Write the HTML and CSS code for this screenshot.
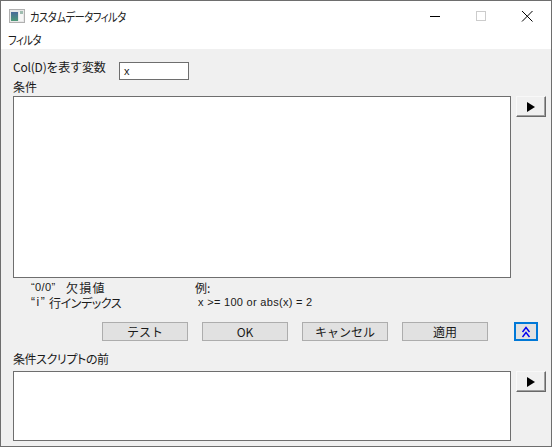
FILE: index.html
```html
<!DOCTYPE html>
<html lang="ja">
<head>
    <meta charset="UTF-8">
    <title>カスタムデータフィルタ</title>
    <link rel="stylesheet" href="styles.css">
</head>
<body>
    <div class="window">
        <!-- Title bar -->
        <div class="titlebar">
            <svg class="app-icon" width="16" height="14" viewBox="0 0 16 14">
                <defs>
                    <linearGradient id="panel" x1="0" y1="0" x2="0" y2="1">
                        <stop offset="0" stop-color="#4a6a9a"/>
                        <stop offset="1" stop-color="#4f9a78"/>
                    </linearGradient>
                </defs>
                <rect x="0.5" y="0.5" width="15" height="13" fill="#e8e8e8" stroke="#b0b0b0"/>
                <rect x="2" y="3" width="7" height="9" fill="url(#panel)"/>
                <rect x="10" y="3" width="4" height="9" fill="#f6f6f6"/>
                <rect x="11" y="2" width="3" height="3" fill="#9fbdb0"/>
            </svg>
            <div class="title"><span class="narrow">カスタムデータフィルタ</span></div>
            <div class="controls">
                <svg width="46" height="30" viewBox="0 0 46 30"><path d="M18 15.500H28" stroke="#000" fill="none"/></svg>
                <svg width="46" height="30" viewBox="0 0 46 30"><rect x="18.500" y="10.500" width="9" height="9" stroke="#ccc" fill="none"/></svg>
                <svg width="46" height="30" viewBox="0 0 46 30"><path d="M18 10L28.500 20.500M28.500 10L18 20.500" stroke="#000" fill="none"/></svg>
            </div>
        </div>

        <!-- Menu -->
        <div class="menubar"><span class="narrow">フィルタ</span></div>

        <div class="content">
            <div class="var-row">
                <label class="var-label">Col(D)を表す変数</label>
                <div class="field">x</div>
            </div>
            <div class="label cond-label">条件</div>
            <div class="editor-row">
                <div class="editor editor-main"></div>
                <button class="run-btn"><svg width="10" height="10" viewBox="0 0 10 10"><path d="M1 0L9 5L1 10Z" fill="#000"/></svg></button>
            </div>

            <div class="hints">
                <div class="hint-col hint-left">
                    <div class="hint-line"><span class="token token-nan">“0/0”</span><span class="wide">欠損値</span></div>
                    <div class="hint-line"><span class="token token-i">“i”</span><span class="kana">行インデックス</span></div>
                </div>
                <div class="hint-col">
                    <div>例:</div>
                    <div class="example">x &gt;= 100 or abs(x) = 2</div>
                </div>
            </div>

            <div class="actions">
                <button class="btn">テスト</button>
                <button class="btn">OK</button>
                <button class="btn">キャンセル</button>
                <button class="btn">適用</button>
                <button class="collapse-btn">
                    <svg width="10" height="12" viewBox="0 0 10 12"><path d="M1.500 6L5 1.500L8.500 6M1.500 11L5 6.500L8.500 11" stroke="#0000f0" stroke-width="1.400" fill="none"/></svg>
                </button>
            </div>

            <div class="label pre-label kana">条件スクリプトの前</div>
            <div class="editor-row">
                <div class="editor editor-pre"></div>
                <button class="run-btn"><svg width="10" height="10" viewBox="0 0 10 10"><path d="M1 0L9 5L1 10Z" fill="#000"/></svg></button>
            </div>
        </div>
    </div>
</body>
</html>
```

FILE: styles.css
```css
* {
    box-sizing: border-box;
    margin: 0;
    padding: 0;
    font-family: "Noto Sans CJK JP", "Liberation Sans", sans-serif;
}

body {
    background-color: #ffffff;
    color: #1a1a1a;
    font-size: 12px;
    overflow: hidden;
}

.window {
    width: 552px;
    height: 447px;
    display: flex;
    flex-direction: column;
    border: 1px solid #6e6e6e;
    background-color: #f0f0f0;
}

/* Title bar */
.titlebar {
    height: 30px;
    display: flex;
    align-items: center;
    padding-left: 8px;
    background-color: #ffffff;
    flex-shrink: 0;
}

.app-icon {
    margin-right: 5px;
}

.title {
    flex: 1;
    color: #222222;
}

/* Condensed katakana used by the title and the menu */
.narrow {
    display: inline-block;
    font-feature-settings: "palt";
    letter-spacing: -0.6px;
    transform: scaleX(0.86);
    transform-origin: left center;
}

.controls {
    display: flex;
    margin-right: 1px;
}

.controls svg {
    display: block;
}

/* Menu */
.menubar {
    height: 18px;
    line-height: 18px;
    padding-left: 7px;
    background-color: #ffffff;
    flex-shrink: 0;
}

/* Content */
.content {
    flex: 1;
    padding: 0 5px 0 12px;
}

.var-row {
    display: flex;
    align-items: flex-start;
    height: 18px;
    margin-top: 13px;
}

.var-label {
    width: 106px;
    line-height: 10px;
    letter-spacing: -0.2px;
}

.field {
    width: 70px;
    height: 18px;
    line-height: 17px;
    padding-left: 4px;
    background-color: #ffffff;
    border: 1px solid #6e6e6e;
    font-family: "Liberation Sans", sans-serif;
    font-size: 11px;
}

.label {
    height: 16px;
    line-height: 14px;
}

.kana {
    font-feature-settings: "palt";
    letter-spacing: -0.4px;
}

.editor-row {
    display: flex;
    gap: 5px;
    align-items: flex-start;
}

.editor {
    width: 498px;
    background-color: #ffffff;
    border: 1px solid #6e6e6e;
}

.editor-main {
    height: 182px;
}

.editor-pre {
    height: 70px;
}

.run-btn {
    width: 30px;
    height: 21px;
    display: flex;
    align-items: center;
    justify-content: center;
    background-color: #f0f0f0;
    border: 1px solid;
    border-color: #f8f8f8 #696969 #696969 #f8f8f8;
    box-shadow: inset -1px -1px 0 #a0a0a0;
}

/* Hints */
.hints {
    display: flex;
    height: 44px;
    padding-top: 2px;
    line-height: 15px;
}

.hint-left {
    width: 182px;
    padding-left: 18px;
}

.hint-line {
    display: flex;
}

.token {
    font-family: "Liberation Sans", sans-serif;
}

.token-nan {
    width: 35px;
    font-size: 11px;
    letter-spacing: 0.4px;
}

.token-i {
    width: 18px;
    letter-spacing: 1.500px;
}

.wide {
    letter-spacing: 1.300px;
}

.example {
    padding-left: 3px;
    font-family: "Liberation Sans", sans-serif;
    font-size: 11px;
    letter-spacing: 0.3px;
}

/* Buttons */
.actions {
    display: flex;
    align-items: flex-start;
    padding-left: 89px;
    height: 19px;
}

.btn {
    width: 86px;
    height: 19px;
    margin-right: 14px;
    background-color: #e1e1e1;
    border: 1px solid #adadad;
    color: #1a1a1a;
    font-size: 12px;
    line-height: 14px;
}

.collapse-btn {
    width: 24px;
    height: 19px;
    margin-left: 12px;
    display: flex;
    align-items: center;
    justify-content: center;
    background-color: #e1e1e1;
    border: 2px solid #0078d7;
}

.pre-label {
    margin-top: 11px;
    height: 19px;
}
```
